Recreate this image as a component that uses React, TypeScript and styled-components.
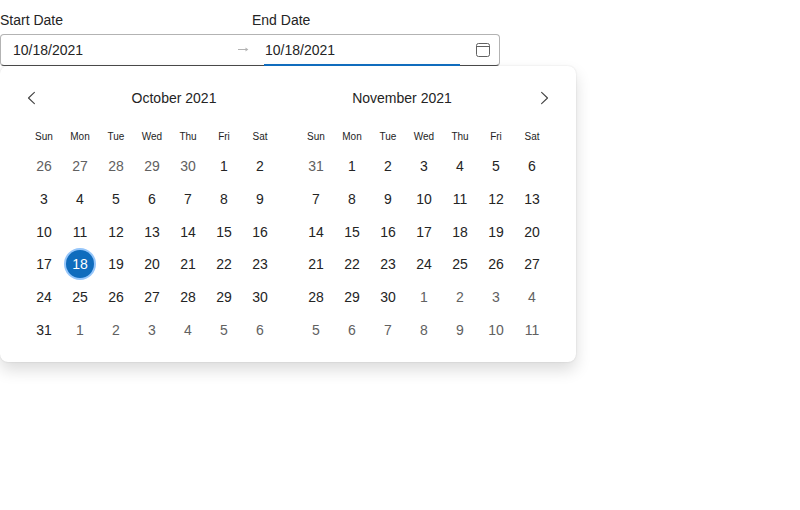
import React from "react";
import styled, { createGlobalStyle } from "styled-components";

const GlobalStyle = createGlobalStyle`
  *, *::before, *::after { box-sizing: border-box; }
  body {
    margin: 0;
    background: #fff;
    color: #242424;
    font: 14px/20px "Liberation Sans", Arial, sans-serif;
  }
`;

const Page = styled.main`
  min-height: 100vh;
`;

const Picker = styled.div`
  width: 576px;
  padding-top: 10px;
`;

const Labels = styled.div`
  display: grid;
  grid-template-columns: 252px 248px;
  height: 24px;
`;

const Label = styled.label`
  line-height: 20px;
`;

const Field = styled.div`
  display: flex;
  align-items: stretch;
  width: 500px;
  height: 32px;
  padding-left: 12px;
  border: 1px solid #b3b3b3;
  border-bottom-color: #4d4d4d;
  border-radius: 4px;
`;

const DateInput = styled.input<{ $width: number }>`
  width: ${(p) => p.$width}px;
  padding: 0;
  border: 0;
  outline: 0;
  background: transparent;
  color: #242424;
  font: inherit;
`;

const Arrow = styled.span`
  display: flex;
  align-items: center;
  padding-left: 14px;
  width: 41px;
`;

const ActiveInput = styled.div`
  display: flex;
  width: 196px;
  height: 31px;
  padding-left: 1px;
  border-bottom: 2px solid #0f6cbd;

  input {
    height: 30px;
    flex-shrink: 0;
  }
`;

const CalendarButton = styled.span`
  display: flex;
  align-items: center;
  margin-left: 13px;
`;

const Popup = styled.div`
  height: 296px;
  padding: 16px 26px;
  border-radius: 8px;
  background: #fff;
  box-shadow: 0 0 2px rgba(0, 0, 0, 0.12), 0 8px 16px rgba(0, 0, 0, 0.14);
`;

const Months = styled.div`
  display: grid;
  grid-template-columns: repeat(2, 252px);
  column-gap: 20px;
`;

const MonthHeader = styled.div<{ $reversed: boolean }>`
  display: flex;
  flex-direction: ${(p) => (p.$reversed ? "row-reverse" : "row")};
  align-items: center;
  gap: 33px;
  height: 32px;
`;

const Title = styled.span`
  flex: 1;
  text-align: center;
`;

const NavButton = styled.button`
  display: flex;
  width: 11px;
  padding: 0;
  border: 0;
  background: none;
  color: #424242;
`;

const Weekdays = styled.div`
  display: grid;
  grid-template-columns: repeat(7, 36px);
  margin-top: 14px;
  height: 16px;
  font-size: 10px;
  line-height: 16px;
  text-align: center;
  padding-top: 1px;
`;

const Days = styled.div`
  display: grid;
  grid-template-columns: repeat(7, 36px);
  grid-auto-rows: 32.67px;
  margin-top: 6px;
  place-items: center;
`;

const Day = styled.span<{ $outside: boolean; $selected: boolean }>`
  display: flex;
  align-items: center;
  justify-content: center;
  width: 28px;
  height: 28px;
  border-radius: 50%;
  color: ${(p) => (p.$selected ? "#fff" : p.$outside ? "#616161" : "#242424")};
  background: ${(p) => (p.$selected ? "#0f6cbd" : "transparent")};
  box-shadow: ${(p) => (p.$selected ? "0 0 0 2px #96c6fa" : "none")};
`;

const WEEKDAYS = ["Sun", "Mon", "Tue", "Wed", "Thu", "Fri", "Sat"];

interface MonthProps {
  title: string;
  month: number;
  firstCell: Date;
  selected?: number;
  nav: "prev" | "next";
}

function Month({ title, month, firstCell, selected, nav }: MonthProps) {
  const cells = Array.from({ length: 42 }, (_, i) =>
    new Date(firstCell.getFullYear(), firstCell.getMonth(), firstCell.getDate() + i)
  );
  const isNext = nav === "next";
  return (
    <div>
      <MonthHeader $reversed={isNext}>
        <NavButton aria-label={isNext ? "Next month" : "Previous month"}>
          <svg width="11" height="14" viewBox="0 0 11 14" fill="none" stroke="currentColor" strokeWidth="1.1" strokeLinecap="round" strokeLinejoin="round">
            <path d={isNext ? "M2.6 1.4 8.5 7l-5.9 5.6" : "M8.4 1.4 2.5 7l5.9 5.6"} />
          </svg>
        </NavButton>
        <Title>{title}</Title>
      </MonthHeader>
      <Weekdays>
        {WEEKDAYS.map((d) => (
          <span key={d}>{d}</span>
        ))}
      </Weekdays>
      <Days>
        {cells.map((d, i) => {
          const outside = d.getMonth() !== month;
          return (
            <Day key={i} $outside={outside} $selected={!outside && d.getDate() === selected}>
              {d.getDate()}
            </Day>
          );
        })}
      </Days>
    </div>
  );
}

export default function App() {
  return (
    <Page>
      <GlobalStyle />
      <Picker>
        <Labels>
          <Label htmlFor="start">Start Date</Label>
          <Label htmlFor="end">End Date</Label>
        </Labels>
        <Field>
          <DateInput id="start" $width={210} defaultValue="10/18/2021" />
          <Arrow>
            <svg width="12" height="8" viewBox="0 0 12 8" fill="none" stroke="#b3b3b3">
              <path d="M1 3.5h9" />
              <path d="M8.5 1.5 11.3 3.5 8.5 5.5z" fill="#b3b3b3" stroke="none" />
            </svg>
          </Arrow>
          <ActiveInput>
            <DateInput id="end" $width={195} defaultValue="10/18/2021" />
          </ActiveInput>
          <CalendarButton>
            <svg width="20" height="20" viewBox="0 0 20 20" fill="none" stroke="#616161">
              <rect x="3.5" y="3.5" width="13" height="13" rx="2" />
              <path d="M3.5 6.5h13" />
            </svg>
          </CalendarButton>
        </Field>
        <Popup>
          <Months>
            <Month title="October 2021" month={9} firstCell={new Date(2021, 8, 26)} selected={18} nav="prev" />
            <Month title="November 2021" month={10} firstCell={new Date(2021, 9, 31)} nav="next" />
          </Months>
        </Popup>
      </Picker>
    </Page>
  );
}
